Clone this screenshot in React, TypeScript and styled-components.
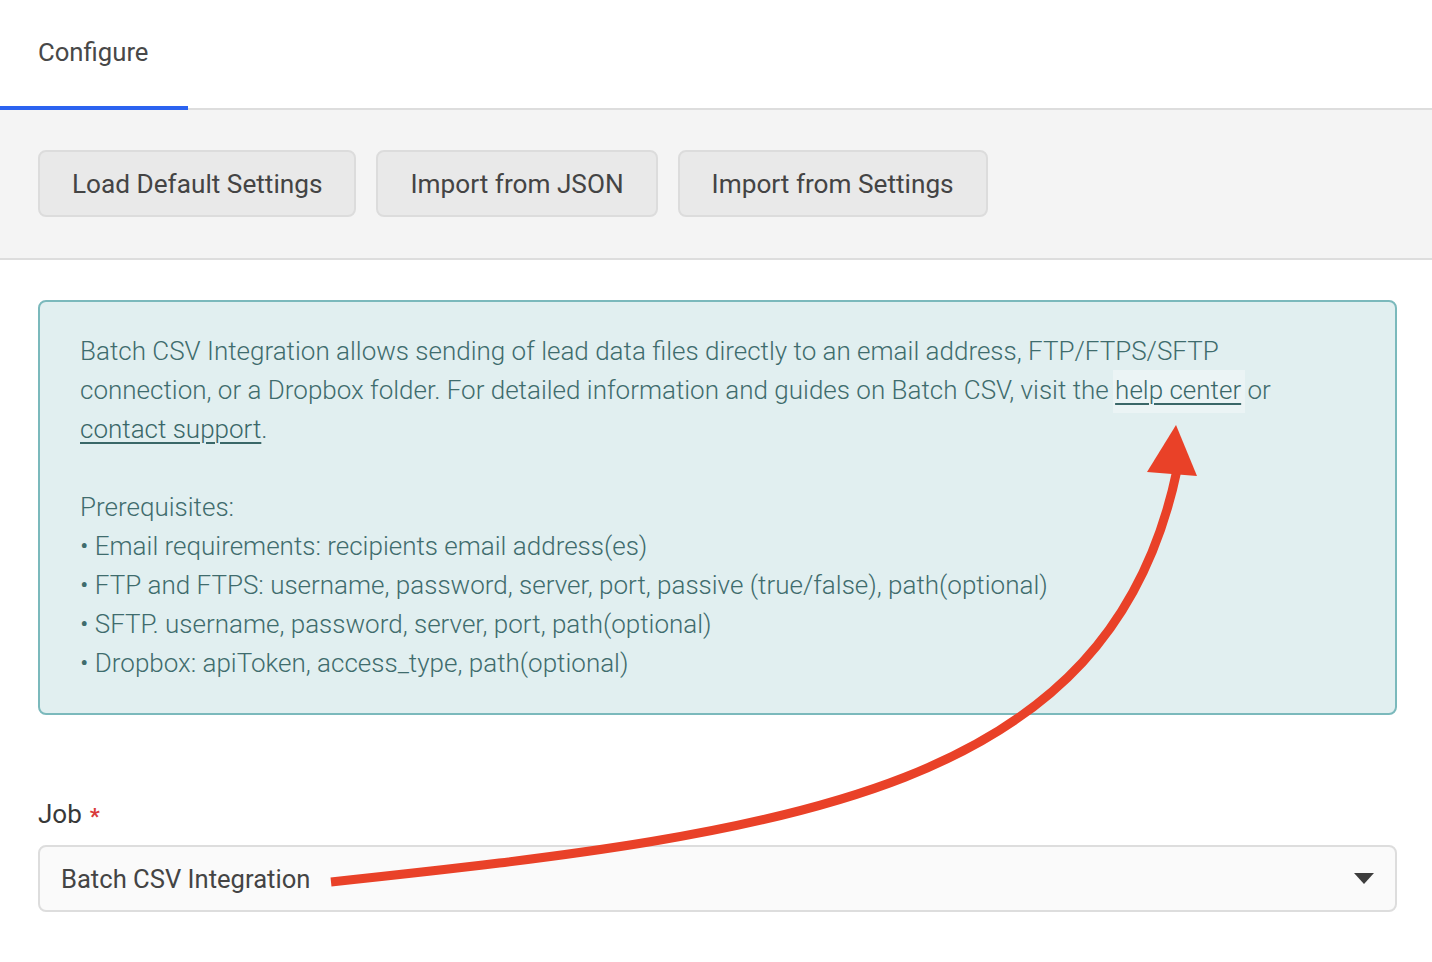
import React from "react";
import styled, { createGlobalStyle } from "styled-components";

const GlobalStyle = createGlobalStyle`
  html, body {
    margin: 0;
    padding: 0;
    background: #fff;
    font-family: Roboto, "Liberation Sans", Arial, sans-serif;
  }
  * { box-sizing: border-box; }
`;

const Page = styled.div`
  position: relative;
  width: 1432px;
  min-height: 962px;
  background: #fff;
`;

const TabBar = styled.div`
  display: flex;
  align-items: flex-end;
  height: 110px;
  border-bottom: 2px solid #dddddd;
`;

const Tab = styled.div<{ $active?: boolean }>`
  display: flex;
  align-items: center;
  width: 188px;
  height: 110px;
  margin-bottom: -2px;
  padding: 0 0 2px 38px;
  font-size: 25.7px;
  color: #484848;
  border-bottom: 4px solid ${(p) => (p.$active ? "#2b63f0" : "transparent")};
`;

const Toolbar = styled.div`
  display: flex;
  gap: 20px;
  padding: 40px 38px 41px;
  background: #f4f4f4;
  border-bottom: 2px solid #dddddd;
`;

const ToolButton = styled.button`
  height: 67px;
  padding: 0 32px;
  background: #e9e9e9;
  border: 2px solid #dcdcdc;
  border-radius: 8px;
  font-family: inherit;
  font-size: 26.2px;
  color: #444;
  cursor: pointer;
`;

const Content = styled.div`
  padding: 40px 35px 0 38px;
`;

const InfoBox = styled.div`
  padding: 30px 40px 30px 40px;
  background: #e1eff0;
  border: 2px solid #7bb9bc;
  border-radius: 8px;
  color: #3f6c6d;
  font-size: 26px;
  font-weight: 300;
  line-height: 39px;
  white-space: nowrap;
`;

const Para = styled.p<{ $gap?: boolean }>`
  margin: 0;
  margin-top: ${(p) => (p.$gap ? "39px" : "0")};
`;

const Link = styled.a<{ $hover?: boolean }>`
  color: #3a6768;
  text-decoration: underline;
  text-decoration-thickness: 2px;
  text-underline-offset: 4px;
  padding: 5px 4px 8px 2px;
  margin: 0 -4px 0 -2px;
  background: ${(p) => (p.$hover ? "rgba(255,255,255,0.35)" : "transparent")};
`;

const Field = styled.div`
  margin-top: 84px;
`;

const Label = styled.div`
  display: flex;
  align-items: center;
  height: 30px;
  font-size: 26px;
  color: #383838;
`;

const Required = styled.span`
  margin-left: 8px;
  color: #d93a3a;
  font-size: 22px;
  font-weight: 700;
  position: relative;
  top: 2px;
`;

const Select = styled.div`
  display: flex;
  align-items: center;
  justify-content: space-between;
  height: 67px;
  margin-top: 16px;
  padding: 0 21px 0 21px;
  background: #fafafa;
  border: 2px solid #dddddd;
  border-radius: 8px;
  font-size: 25.6px;
  color: #444;
`;

const Caret = styled.span`
  width: 0;
  height: 0;
  border-left: 10px solid transparent;
  border-right: 10px solid transparent;
  border-top: 11px solid #3d3d3d;
`;

const Overlay = styled.svg`
  position: absolute;
  left: 0;
  top: 0;
  pointer-events: none;
`;

const bullets = [
  "Email requirements: recipients email address(es)",
  "FTP and FTPS: username, password, server, port, passive (true/false), path(optional)",
  "SFTP. username, password, server, port, path(optional)",
  "Dropbox: apiToken, access_type, path(optional)",
];

export default function App() {
  return (
    <Page>
      <GlobalStyle />
      <TabBar>
        <Tab $active>Configure</Tab>
      </TabBar>
      <Toolbar>
        <ToolButton>Load Default Settings</ToolButton>
        <ToolButton>Import from JSON</ToolButton>
        <ToolButton>Import from Settings</ToolButton>
      </Toolbar>
      <Content>
        <InfoBox>
          <Para>
            Batch CSV Integration allows sending of lead data files directly to an email address, FTP/FTPS/SFTP
            <br />
            connection, or a Dropbox folder. For detailed information and guides on Batch CSV, visit the{" "}
            <Link href="#" $hover>help center</Link> or
            <br />
            <Link href="#">contact support</Link>.
          </Para>
          <Para $gap>Prerequisites:</Para>
          {bullets.map((b) => (
            <Para key={b}>• {b}</Para>
          ))}
        </InfoBox>
        <Field>
          <Label>
            Job<Required>*</Required>
          </Label>
          <Select>
            <span>Batch CSV Integration</span>
            <Caret />
          </Select>
        </Field>
      </Content>
      <Overlay width="1432" height="962" viewBox="0 0 1432 962">
        <path
          d="M331 882 C800 832, 1110 790, 1177 470"
          fill="none"
          stroke="#e94128"
          strokeWidth="9"
        />
        <polygon points="1176,425 1147,472 1197,476" fill="#e94128" />
      </Overlay>
    </Page>
  );
}
